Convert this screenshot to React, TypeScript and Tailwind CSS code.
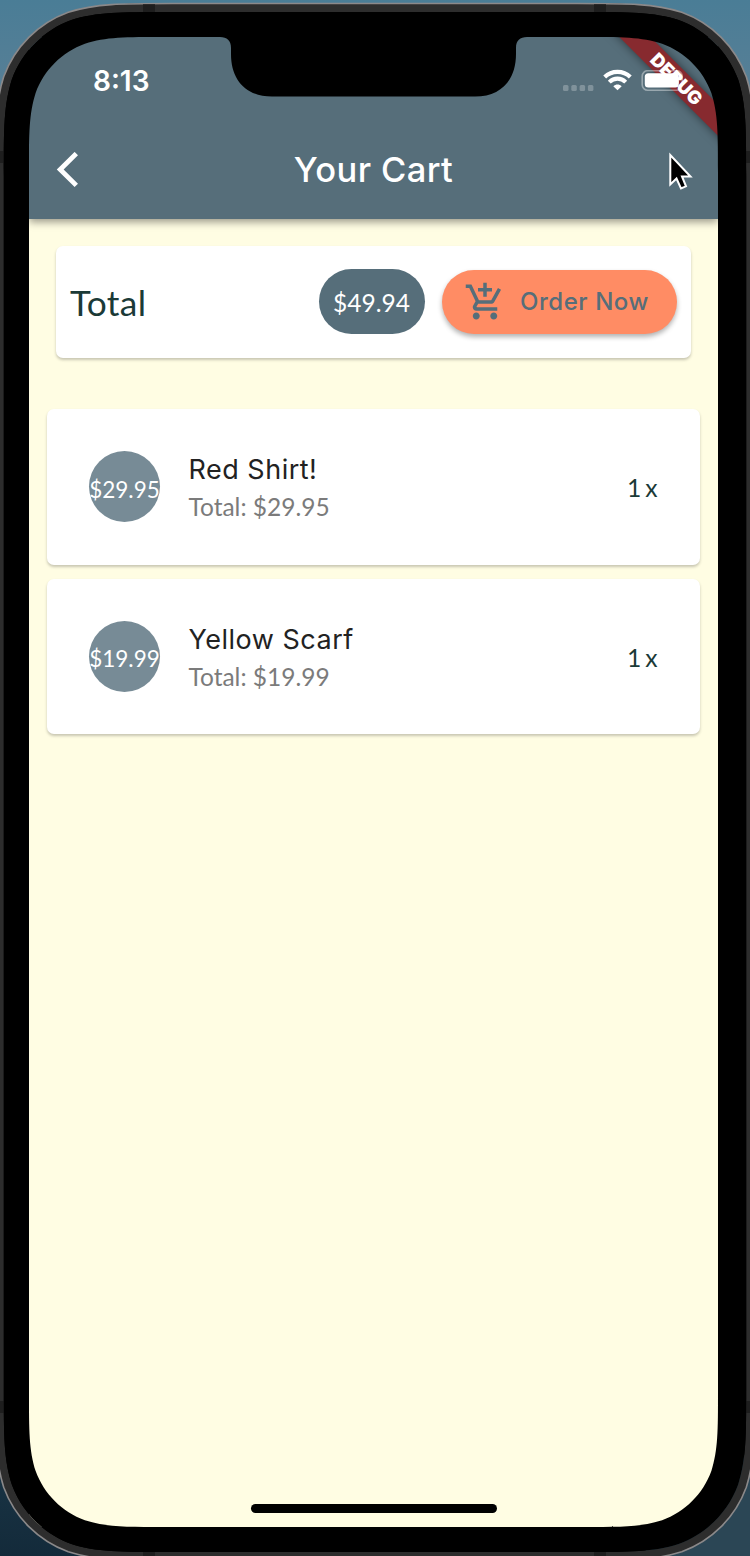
const SF = "font-['Inter','Roboto',sans-serif]";
const LATO = "font-['Lato',sans-serif]";

/* Rounded rectangle with continuous-curvature corners. */
function squircle(x: number, y: number, w: number, h: number, r: number): string {
  const a = 1.528665 * r;
  const b = 1.08849296 * r;
  const c = 0.86840694 * r;
  const d = 0.63149379 * r;
  const e = 0.07491139 * r;
  const f = 0.37282383 * r;
  const g = 0.16905956 * r;
  const R = x + w;
  const B = y + h;
  return [
    `M${x + a} ${y}H${R - a}`,
    `C${R - b} ${y} ${R - c} ${y} ${R - d} ${y + e}`,
    `C${R - f} ${y + g} ${R - g} ${y + f} ${R - e} ${y + d}`,
    `C${R} ${y + c} ${R} ${y + b} ${R} ${y + a}`,
    `V${B - a}`,
    `C${R} ${B - b} ${R} ${B - c} ${R - e} ${B - d}`,
    `C${R - g} ${B - f} ${R - f} ${B - g} ${R - d} ${B - e}`,
    `C${R - c} ${B} ${R - b} ${B} ${R - a} ${B}`,
    `H${x + a}`,
    `C${x + b} ${B} ${x + c} ${B} ${x + d} ${B - e}`,
    `C${x + f} ${B - g} ${x + g} ${B - f} ${x + e} ${B - d}`,
    `C${x} ${B - c} ${x} ${B - b} ${x} ${B - a}`,
    `V${y + a}`,
    `C${x} ${y + b} ${x} ${y + c} ${x + e} ${y + d}`,
    `C${x + g} ${y + f} ${x + f} ${y + g} ${x + d} ${y + e}`,
    `C${x + c} ${y} ${x + b} ${y} ${x + a} ${y}Z`,
  ].join("");
}

const OUTER = squircle(-5, 3.5, 760, 1557, 116);
const RIM = squircle(3.8, 12, 742.4, 1540, 107);
const SCREEN = squircle(29, 37, 689, 1490, 88.5);

function DeviceBezel() {
  return (
    <svg className="pointer-events-none absolute inset-0 z-20" width="750" height="1556" viewBox="0 0 750 1556" aria-hidden="true">
      <defs>
        <linearGradient id="desk" x1="0" y1="0" x2="0" y2="1">
          <stop offset="0" stopColor="#4a7d96" />
          <stop offset="0.06" stopColor="#587f96" />
          <stop offset="0.9" stopColor="#1d3a4b" />
          <stop offset="1" stopColor="#132a3a" />
        </linearGradient>
      </defs>
      <path fillRule="evenodd" fill="url(#desk)" d={`M0 0H750V1556H0Z${OUTER}`} />
      <path d="M640 1556H750V1450Z" fill="#2b4655" />
      <path fillRule="evenodd" fill="#2d2d2d" d={OUTER + RIM} />
      <path fill="none" stroke="#8b898a" strokeWidth="1.6" d={OUTER} />
      <g fill="#1e1e1e">
        <path d="M143 4.3h12v8h-12zM594 4.3h12v8h-12zM143 1552h12v8h-12zM594 1552h12v8h-12zM0 151h4v12H0zM746 151h4v12h-4zM0 1401h4v12H0zM746 1401h4v12h-4z" />
      </g>
      <path fillRule="evenodd" fill="#000" d={RIM + SCREEN} />
      <path d="M220 36V37C227 37 231 40.500 231 48V54C231 80 246 96.500 272 96.500H475C501 96.500 516 80 516 54V48C516 40.500 520 37 527 37V36Z" fill="#000" />
    </svg>
  );
}

function StatusBar() {
  return (
    <div className="relative z-10 flex h-[83px] items-center pl-[64px] pr-[33px] pt-[4px]">
      <span className={`${SF} mt-[1px] text-[28px] font-semibold text-white`}>8:13</span>
      <div className="ml-auto flex items-center">
        <svg width="32" height="22" viewBox="0 0 32 22" fill="#fff" fillOpacity="0.25">
          <rect x="1" y="15" width="5.500" height="6" rx="1.500" />
          <rect x="9.300" y="15" width="5.500" height="6" rx="1.500" />
          <rect x="17.600" y="15" width="5.500" height="6" rx="1.500" />
          <rect x="25.900" y="15" width="5.500" height="6" rx="1.500" />
        </svg>
        <svg className="-mt-[2px] ml-[9px]" width="29" height="22" viewBox="0 0 29 22" fill="none" stroke="#fff" strokeWidth="4.100">
          <path d="M1.700 8C8.600 1.200 20.400 1.200 27.300 8" />
          <path d="M6.300 13.100C11 8.500 18 8.500 22.700 13.100" />
          <path d="M14.500 21.300L10.300 17.200C12.700 15 16.300 15 18.700 17.200Z" fill="#fff" stroke="none" />
        </svg>
        <svg className="ml-[9px]" width="44" height="22" viewBox="0 0 44 22" fill="none">
          <rect x="1.200" y="0.700" width="40" height="19.500" rx="5.500" stroke="#fff" strokeOpacity="0.4" strokeWidth="1.600" />
          <rect x="3.800" y="3.300" width="34" height="14.300" rx="3.500" fill="#fff" />
        </svg>
      </div>
    </div>
  );
}

function DebugBanner() {
  return (
    <div className={`absolute left-[547.500px] top-[30.500px] flex h-[21.500px] w-[200px] rotate-45 items-center justify-center bg-[#872a2f] text-[18.500px] font-black leading-none text-white shadow-[0_0_10px_rgba(0,0,0,0.5)] ${SF}`}>
      DEBUG
    </div>
  );
}

function Header() {
  return (
    <header className="relative z-10 h-[182px] shadow-[0_3px_8px_rgba(0,0,0,0.4)]">
      <div className="relative h-full overflow-hidden bg-[#566e7a]">
        <DebugBanner />
        <StatusBar />
        <div className="relative grid h-[99px] grid-cols-[120px_1fr_120px] items-center">
          <svg className="ml-[27px]" width="24" height="36" viewBox="0 0 24 36" fill="none" stroke="#fff" strokeWidth="4.800">
            <path d="M20.300 1.600L4.200 17.500L20.300 33.400" />
          </svg>
          <h1 className={`${SF} mt-[2px] whitespace-nowrap text-center text-[34.500px] font-medium leading-none tracking-[0.400px] text-white`}>Your Cart</h1>
          <svg className="ml-[70px] mt-[4px]" width="30" height="42" viewBox="0 0 30 42">
            <path d="M2.300 4V33.500L8.500 27.500L13 37.500L18 35.300L14 25.500H22.500Z" fill="#000" stroke="#fff" strokeWidth="2" />
          </svg>
        </div>
      </div>
    </header>
  );
}

function CartPlusIcon() {
  return (
    <svg width="42" height="42" viewBox="0 0 24 24" fill="#566e7a">
      <path d="M11 9h2V6h3V4h-3V1h-2v3H8v2h3v3zm-4 9c-1.100 0-1.990.9-1.990 2S5.900 22 7 22s2-.9 2-2-.9-2-2-2zm10 0c-1.100 0-1.990.9-1.990 2s.89 2 1.990 2 2-.9 2-2-.9-2-2-2zm-9.830-3.250l.03-.12.9-1.630h7.450c.75 0 1.410-.41 1.750-1.030l3.860-7.010L19.420 4h-.01l-1.100 2-2.760 5H8.530l-.13-.27L6.160 6l-.95-2-.94-2H1v2h2l3.600 7.590-1.350 2.450c-.16.28-.25.61-.25.96 0 1.100.9 2 2 2h12v-2H7.420c-.13 0-.25-.11-.25-.25z" />
    </svg>
  );
}

function TotalCard() {
  return (
    <section className="mx-[27px] mt-[27px] flex h-[112px] items-center rounded-[7px] bg-white pl-[14px] pr-[14px] shadow-[0_2px_3px_rgba(0,0,0,0.22)]">
      <span className={`${LATO} mt-[2px] text-[35.300px] leading-none tracking-[0.300px] text-[#1b3a37]`}>Total</span>
      <span className={`${LATO} -mt-[1px] ml-auto flex h-[65px] w-[106px] items-center justify-center rounded-full bg-[#566e7a] pt-[3px] text-[24.500px] leading-none text-white`}>$49.94</span>
      <button className={`${SF} ml-[17.500px] flex h-[64px] w-[235px] items-center rounded-full bg-[#ff8c64] pl-[22px] text-[24px] font-medium leading-none tracking-[0.550px] text-[#566e7a] shadow-[0_3px_5px_rgba(0,0,0,0.3)]`}>
        <CartPlusIcon />
        <span className="ml-[14px] whitespace-nowrap">Order Now</span>
      </button>
    </section>
  );
}

const ITEMS = [
  { title: "Red Shirt!", price: "$29.95", total: "Total: $29.95", qty: "1 x" },
  { title: "Yellow Scarf", price: "$19.99", total: "Total: $19.99", qty: "1 x" },
];

function CartRow({ item }: { item: (typeof ITEMS)[number] }) {
  return (
    <li className="flex h-[155.500px] items-center rounded-[7px] bg-white pl-[42px] pr-[42.500px] shadow-[0_2px_3px_rgba(0,0,0,0.22)]">
      <span className={`${LATO} flex size-[71px] shrink-0 items-center justify-center rounded-full bg-[#778b96] pt-[6px] text-[22.500px] leading-none text-white`}>{item.price}</span>
      <div className="ml-[28.500px] mt-[3px]">
        <p className={`${SF} text-[27px] leading-[38px] tracking-[0.500px] text-[#222]`}>{item.title}</p>
        <p className={`${LATO} text-[24.500px] leading-[36px] text-[#7b7b7b]`}>{item.total}</p>
      </div>
      <span className={`${LATO} ml-auto mt-[4px] text-[24.700px] leading-none text-[#1b3a37] [word-spacing:-2.500px]`}>{item.qty}</span>
    </li>
  );
}

export default function App() {
  return (
    <div className="relative h-[1556px] w-[750px] overflow-hidden bg-black pb-[29px] pl-[29px] pr-[32px] pt-[37px]">
      <main className="flex h-full flex-col bg-[#fffde3]">
        <Header />
        <TotalCard />
        <ul className="mx-[18px] mt-[51px] flex flex-col gap-[14px]">
          {ITEMS.map((item) => (
            <CartRow key={item.title} item={item} />
          ))}
        </ul>
        <div className="mx-auto mb-[14px] mt-auto h-[9px] w-[246px] rounded-full bg-black" />
      </main>
      <DeviceBezel />
    </div>
  );
}
